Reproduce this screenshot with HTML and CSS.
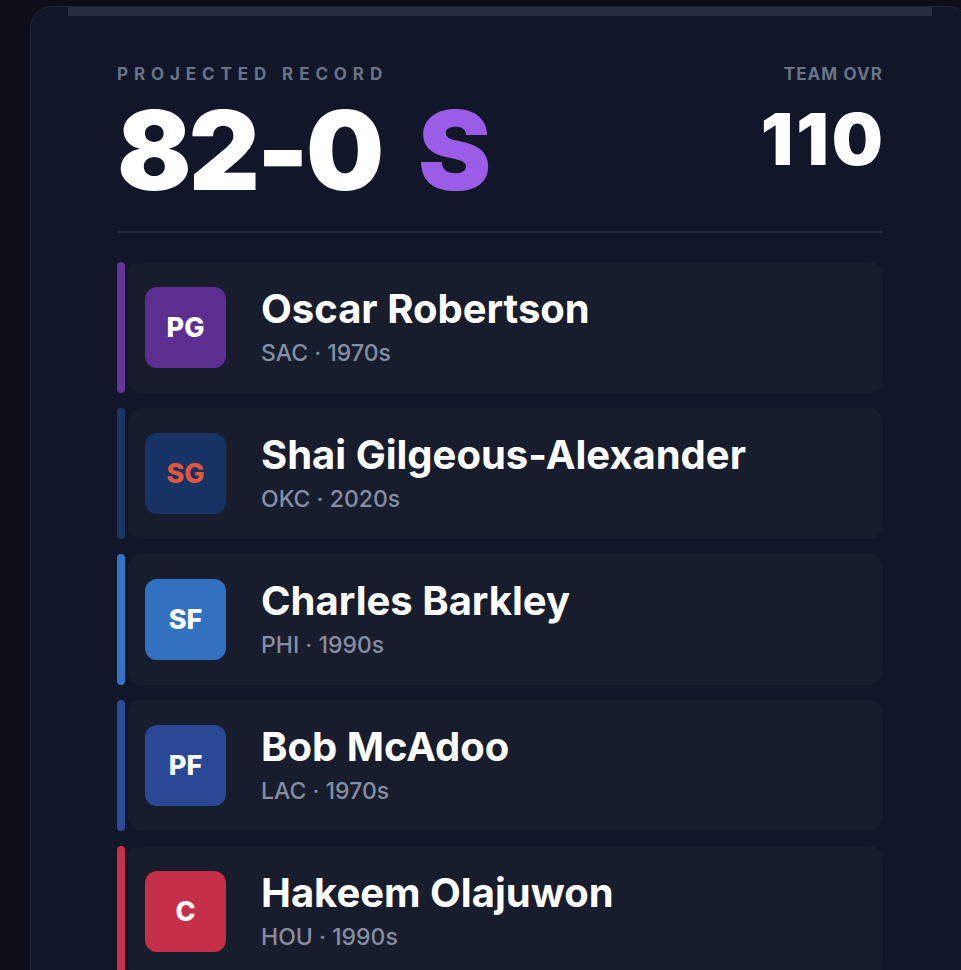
FILE: index.html
```html
<!DOCTYPE html>
<html lang="en">
<head>
    <meta charset="UTF-8">
    <meta name="viewport" content="width=device-width, initial-scale=1.0">
    <title>Projected Record</title>
    <link rel="stylesheet" href="styles.css">
</head>
<body>
    <div class="card">
        <div class="card-strip"></div>

        <div class="summary">
            <div class="record">
                <div class="label label-wide">Projected Record</div>
                <div class="record-value">82-0 <span class="grade">S</span></div>
            </div>
            <div class="ovr">
                <div class="label">Team OVR</div>
                <div class="ovr-value">110</div>
            </div>
        </div>

        <div class="divider"></div>

        <div class="roster">
            <div class="player pos-pg">
                <div class="accent"></div>
                <div class="player-body">
                    <div class="badge">PG</div>
                    <div class="info">
                        <div class="name">Oscar Robertson</div>
                        <div class="meta">SAC · 1970s</div>
                    </div>
                </div>
            </div>
            <div class="player pos-sg">
                <div class="accent"></div>
                <div class="player-body">
                    <div class="badge">SG</div>
                    <div class="info">
                        <div class="name">Shai Gilgeous-Alexander</div>
                        <div class="meta">OKC · 2020s</div>
                    </div>
                </div>
            </div>
            <div class="player pos-sf">
                <div class="accent"></div>
                <div class="player-body">
                    <div class="badge">SF</div>
                    <div class="info">
                        <div class="name">Charles Barkley</div>
                        <div class="meta">PHI · 1990s</div>
                    </div>
                </div>
            </div>
            <div class="player pos-pf">
                <div class="accent"></div>
                <div class="player-body">
                    <div class="badge">PF</div>
                    <div class="info">
                        <div class="name">Bob McAdoo</div>
                        <div class="meta">LAC · 1970s</div>
                    </div>
                </div>
            </div>
            <div class="player pos-c">
                <div class="accent"></div>
                <div class="player-body">
                    <div class="badge">C</div>
                    <div class="info">
                        <div class="name">Hakeem Olajuwon</div>
                        <div class="meta">HOU · 1990s</div>
                    </div>
                </div>
            </div>
        </div>
    </div>
</body>
</html>
```

FILE: styles.css
```css
body {
    font-family: Inter, "Noto Sans", sans-serif;
    background-color: #0c0f17;
    margin: 0;
    overflow: hidden;
}
.card {
    width: 940px;
    box-sizing: border-box;
    margin: 6px 0 0 30px;
    padding: 0 86px 40px;
    background: #111728;
    border: 1px solid #1e2434;
    border-radius: 22px;
}
.card-strip {
    height: 9px;
    margin: 0 -49px;
    background: #272e3f;
}

/* header */
.summary {
    display: flex;
    justify-content: space-between;
    margin-top: 48px;
}
.label {
    font-size: 17px;
    line-height: 1.2;
    font-weight: 700;
    color: #6a7488;
    text-transform: uppercase;
    letter-spacing: 1.1px;
}
.label-wide {
    letter-spacing: 5.9px;
}
.record-value {
    margin-top: 11px;
    font-size: 110px;
    line-height: 1;
    font-weight: 900;
    color: #fff;
    letter-spacing: -3px;
}
.grade {
    color: #9b5ce8;
    margin-left: 18px;
}
.ovr {
    text-align: right;
}
.ovr-value {
    margin-top: 19px;
    margin-right: -3px;
    font-size: 72px;
    line-height: 1;
    font-weight: 900;
    color: #fff;
    letter-spacing: 3px;
}
.divider {
    height: 2px;
    background: #242b3b;
    margin-top: 26px;
}

/* roster */
.roster {
    display: flex;
    flex-direction: column;
    gap: 15px;
    margin-top: 29px;
}
.player {
    display: flex;
    gap: 3px;
}
.accent {
    width: 8px;
    border-radius: 4px;
}
.player-body {
    flex: 1;
    display: flex;
    align-items: center;
    gap: 35px;
    padding: 25px 17px;
    background: #171d2d;
    border-radius: 14px;
}
.badge {
    width: 81px;
    height: 81px;
    flex-shrink: 0;
    border-radius: 12px;
    display: flex;
    align-items: center;
    justify-content: center;
    font-size: 27px;
    font-weight: 800;
    color: #fff;
}
.info {
    padding-bottom: 2px;
}
.name {
    font-size: 40px;
    line-height: 44px;
    font-weight: 700;
    color: #fff;
}
.meta {
    margin-top: 10px;
    font-size: 23px;
    line-height: 25px;
    font-weight: 500;
    color: #858ea2;
}

.pos-pg .accent { background: #64369a; }
.pos-pg .badge { background: #5b2e90; }
.pos-sg .accent { background: #1a3668; }
.pos-sg .badge { background: #173264; color: #e2573d; }
.pos-sf .accent { background: #3574c3; }
.pos-sf .badge { background: #3271bf; }
.pos-pf .accent { background: #2c4b9a; }
.pos-pf .badge { background: #2a4896; }
.pos-c .accent { background: #c8304a; }
.pos-c .badge { background: #c62f48; }
```
